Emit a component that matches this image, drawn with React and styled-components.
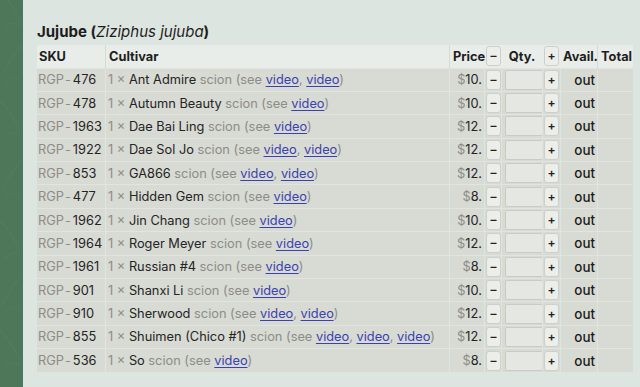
import React from 'react';
import styled, { createGlobalStyle } from 'styled-components';

const GlobalStyle = createGlobalStyle`
  html, body {
    margin: 0;
    padding: 0;
    background: #dce5df;
  }
  body {
    font-family: Inter, "Noto Sans", "Liberation Sans", sans-serif;
    color: #222;
  }
`;

const Page = styled.div`
  display: flex;
  min-height: 387px;
`;

const Sidebar = styled.div`
  width: 23px;
  flex-shrink: 0;
  background: #4e7759;
  overflow: hidden;
  svg { display: block; }
`;

const Main = styled.main`
  flex: 1;
  padding: 22px 8px 14px 13px;
  background: #dce5df;
`;

const Heading = styled.h2`
  margin: 0 0 4px 1px;
  font-size: 15px;
  font-weight: 700;
  line-height: 19px;
  color: #1d1d1d;
  em { font-weight: 400; }
`;

const Table = styled.table`
  width: 596px;
  border-collapse: collapse;
  table-layout: fixed;
  font-size: 12.8px;
`;

const HeadRow = styled.tr`
  background: #e9ede9;
  height: 23px;
`;

const Th = styled.th`
  padding: 0 ${p => p.$pad || 3}px 0 ${p => p.$padLeft ?? 3}px;
  font-weight: 700;
  text-align: ${p => p.$align || 'left'};
  color: #1e1e1e;
  border-left: 1px solid ${p => (p.$divider ? '#d6dad5' : 'transparent')};
  white-space: nowrap;
`;

const Row = styled.tr`
  background: #d8dad4;
  height: 23.4px;
  border-top: 1px solid #e2e4df;
`;

const Td = styled.td`
  padding: 0 ${p => p.$pad || 3}px 0 ${p => p.$padLeft ?? 3}px;
  text-align: ${p => p.$align || 'left'};
  border-left: 1px solid ${p => (p.$divider ? '#e2e4df' : 'transparent')};
  white-space: nowrap;
  overflow: hidden;
`;

const Muted = styled.span`
  color: #8c8d88;
`;

const Dash = styled.span`
  color: #8c8d88;
  margin: 0 2px 0 1px;
`;

const Dark = styled.span`
  color: #242424;
`;

const VideoLink = styled.a`
  color: #3b41b0;
  text-decoration: underline;
  text-underline-offset: 2px;
`;

const StepButton = styled.button`
  display: block;
  width: 15px;
  height: 20px;
  margin: 0 auto;
  padding: 0;
  border: 1px solid #cdd0ca;
  border-radius: 3px;
  background: #eceeea;
  color: #222;
  font-family: inherit;
  font-size: 12px;
  font-weight: 600;
  line-height: 18px;
`;

const QtyInput = styled.input`
  display: block;
  box-sizing: border-box;
  width: 38px;
  height: 20px;
  margin: 0 auto;
  border: 1px solid #c9ccc6;
  border-radius: 2px;
  background: #e5e7e3;
`;

const Avail = styled.span`
  color: #1a1a1a;
  font-weight: 500;
  font-size: 13.4px;
`;

const items = [
  { sku: '476', name: 'Ant Admire', videos: 2, price: '10.' },
  { sku: '478', name: 'Autumn Beauty', videos: 1, price: '10.' },
  { sku: '1963', name: 'Dae Bai Ling', videos: 1, price: '12.' },
  { sku: '1922', name: 'Dae Sol Jo', videos: 2, price: '12.' },
  { sku: '853', name: 'GA866', videos: 2, price: '12.' },
  { sku: '477', name: 'Hidden Gem', videos: 1, price: '8.' },
  { sku: '1962', name: 'Jin Chang', videos: 1, price: '10.' },
  { sku: '1964', name: 'Roger Meyer', videos: 1, price: '12.' },
  { sku: '1961', name: 'Russian #4', videos: 1, price: '8.' },
  { sku: '901', name: 'Shanxi Li', videos: 1, price: '10.' },
  { sku: '910', name: 'Sherwood', videos: 2, price: '12.' },
  { sku: '855', name: 'Shuimen (Chico #1)', videos: 3, price: '12.' },
  { sku: '536', name: 'So', videos: 1, price: '8.' },
];

// faint leaf pattern on the green strip
const Leaves = () => (
  <svg width="23" height="387" viewBox="0 0 23 387">
    {[20, 75, 130, 190, 250, 305, 360].map((y, i) => (
      <g key={y} fill="none" stroke="#577f61" strokeWidth="1.2" opacity="0.5">
        <path d={`M${i % 2 ? 2 : 20} ${y} Q 11 ${y - 18} ${i % 2 ? 22 : 0} ${y - 30}`} />
        <path d={`M4 ${y + 10} Q 12 ${y - 2} 20 ${y + 6}`} />
      </g>
    ))}
  </svg>
);

const Videos = ({ count }) => (
  <>
    {Array.from({ length: count }).map((_, i) => (
      <React.Fragment key={i}>
        {i > 0 && <Muted>, </Muted>}
        <VideoLink href="#">video</VideoLink>
      </React.Fragment>
    ))}
  </>
);

const App = () => (
  <>
    <GlobalStyle />
    <Page>
      <Sidebar><Leaves /></Sidebar>
      <Main>
        <Heading>Jujube (<em>Ziziphus jujuba</em>)</Heading>
        <Table>
          <colgroup>
            <col style={{ width: 69 }} />
            <col style={{ width: 344 }} />
            <col style={{ width: 35 }} />
            <col style={{ width: 17 }} />
            <col style={{ width: 41 }} />
            <col style={{ width: 18 }} />
            <col style={{ width: 37 }} />
            <col style={{ width: 35 }} />
          </colgroup>
          <thead>
            <HeadRow>
              <Th $padLeft={2}>SKU</Th>
              <Th $divider>Cultivar</Th>
              <Th $divider $align="right" $pad={1}>Price</Th>
              <Th $align="center" $padLeft={1} $pad={1}><StepButton>–</StepButton></Th>
              <Th $align="center">Qty.</Th>
              <Th $align="center" $padLeft={1} $pad={1}><StepButton>+</StepButton></Th>
              <Th $align="center" $padLeft={2} $pad={1}>Avail.</Th>
              <Th $divider $align="center">Total</Th>
            </HeadRow>
          </thead>
          <tbody>
            {items.map(item => (
              <Row key={item.sku}>
                <Td $padLeft={1}><Muted>RGP</Muted><Dash>-</Dash><Dark>{item.sku}</Dark></Td>
                <Td $divider $padLeft={2}>
                  <Muted>1 × </Muted>
                  <Dark>{item.name}</Dark>
                  <Muted> scion (see </Muted>
                  <Videos count={item.videos} />
                  <Muted>)</Muted>
                </Td>
                <Td $divider $align="right" $pad={2}><Muted>$</Muted><Dark>{item.price}</Dark></Td>
                <Td $align="center" $padLeft={1} $pad={1}><StepButton>–</StepButton></Td>
                <Td $align="center"><QtyInput /></Td>
                <Td $align="center" $padLeft={1} $pad={1}><StepButton>+</StepButton></Td>
                <Td $align="right" $pad={2}><Avail>out</Avail></Td>
                <Td $divider />
              </Row>
            ))}
          </tbody>
        </Table>
      </Main>
    </Page>
  </>
);

export default App;
